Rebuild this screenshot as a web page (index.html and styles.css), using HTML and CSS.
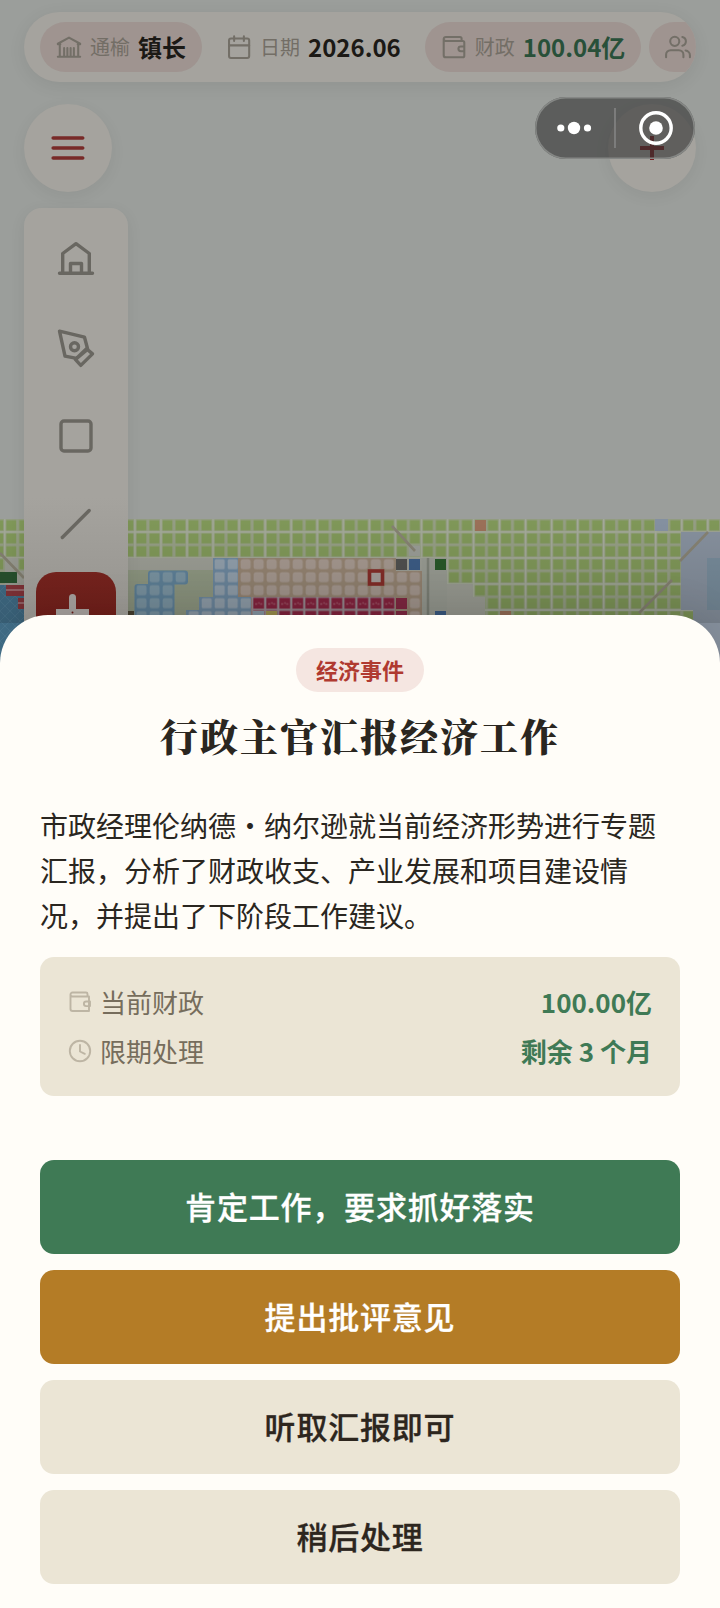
FILE: index.html
```html
<!DOCTYPE html>
<html lang="zh-CN">
<head>
<meta charset="utf-8">
<title>行政主官汇报经济工作</title>
<link rel="stylesheet" href="styles.css">
</head>
<body>
<div class="screen">
  <svg class="map" viewBox="0 0 720 180" width="720" height="180">
    <defs>
      <pattern id="green" x="135" y="17.5" width="13.02" height="13" patternUnits="userSpaceOnUse"><rect width="14" height="14" fill="#949d84"/><rect x="1.400" y="1.700" width="10" height="10.200" fill="#7f9758"/></pattern>
      <pattern id="lines" x="134.300" y="4.300" width="26.04" height="26" patternUnits="userSpaceOnUse"><path d="M0 .7H26.1M.7 0V26" stroke="#a3a999" stroke-width="1.4"/></pattern>
      <pattern id="pink" x="135" y="17.5" width="13.02" height="13" patternUnits="userSpaceOnUse"><rect width="14" height="14" fill="#948371"/><rect x="1.500" y="1.800" width="10" height="10" rx="2.5" fill="#a5988f"/></pattern>
      <pattern id="crimson" x="135" y="17.5" width="13.02" height="13" patternUnits="userSpaceOnUse"><rect width="14" height="14" fill="#988a90"/><rect x="1.200" y="1.400" width="10.700" height="10.800" fill="#86233e"/><path d="M3 7.500h2M6 6.500h1.500M8 7.500h2" fill="none" stroke="#a0576a" stroke-width="1.400"/></pattern>
      <pattern id="blue" x="135" y="17.500" width="13.020" height="13" patternUnits="userSpaceOnUse"><rect width="14" height="14" fill="#5f8199"/><rect x="1.600" y="1.800" width="10" height="10" rx="2" fill="#7b95a3"/></pattern>
      <pattern id="pale" x="135" y="17.500" width="13.020" height="13" patternUnits="userSpaceOnUse"><rect width="14" height="14" fill="#6c879e"/><rect x="1.600" y="1.800" width="10" height="10" rx="1.500" fill="#919fab"/></pattern>
      <pattern id="water" width="10" height="10" patternUnits="userSpaceOnUse"><rect width="10" height="10" fill="#416d87"/><path d="M0 0l10 10M10 0L0 10" stroke="#4c778f" stroke-width=".8"/></pattern>
      <linearGradient id="shade" x1="0" y1="0" x2="0" y2="1"><stop offset="0" stop-color="#000" stop-opacity="0"/><stop offset="1" stop-color="#000" stop-opacity=".13"/></linearGradient>
    </defs>
    <rect y="18" width="720" height="162" fill="#9b9d94"/>
    <rect x="128" y="69" width="86" height="46" fill="#8e9781"/>
    <path d="M0 18H720V30.500H681V109H485V96H473V83H447V57H0z" fill="url(#green)"/>
    <path d="M0 57h5v26H0zM18 57h6v13h-6z" fill="url(#green)"/>
    <path d="M485 109H693V122H485z" fill="url(#green)"/>
    <path d="M0 18H720V30.500H681V109H485V96H473V83H447V57H0z" fill="url(#lines)"/>
    <path d="M485 108.500H693V110H485z" fill="#a3a999"/>
    <path d="M681 31h39v149h-27v-71h-12z" fill="#858f9c"/>
    <path d="M707 57h13v52h-13z" fill="#768a99"/>
    <path d="M655 18h13v12h-13z" fill="#8490a0"/>
    <path d="M475 19h11v11h-11zM500 110h11v8h-11z" fill="#9a7058"/>
    <path d="M0 71h17v11H0z" fill="#28522e"/>
    <path d="M0 84h24v96H0z" fill="url(#water)"/>
    <path d="M6 84h18v11H6zM18 97h6v11h-6z" fill="#85353a"/>
    <path d="M6 89h18M18 102h6" stroke="#a3797e" stroke-width="1.500"/>
    <path d="M151 69.500h34q3 0 3 3v8q0 3-3 3h-10.500V122H134.500V86q0-3 3-3H148V72.500q0-3 3-3z" fill="url(#blue)"/>
    <path d="M213 57h25v65h-52v-13h13V96h14z" fill="url(#pale)"/>
    <path d="M238 57h158v13h26v52H238z" fill="url(#pink)"/>
    <path d="M238 96h13v26h-13z" fill="url(#pale)"/>
    <path d="M251.500 96H395v26H251.500z" fill="url(#crimson)"/>
    <path d="M396 97h11v11h-11zM396 110h11v9h-11z" fill="#842943"/>
    <path d="M253 110h11v10h-11z" fill="#8c9dab"/>
    <path d="M266 110h11v10h-11z" fill="#a29650"/>
    <path d="M128 110h6v10h-6z" fill="#4c4433"/>
    <path d="M396 58h11v11h-11z" fill="#50504f"/>
    <path d="M409 58h11v11h-11zM435 110h11v9h-11z" fill="#3c5c85"/>
    <path d="M409 44.500h11v11h-11z" fill="#989b95"/>
    <path d="M422 57h25v52h-25z" fill="#989b92"/>
    <path d="M435 58h11v11h-11z" fill="#285829"/>
    <path d="M428 57v65" stroke="#7d8177" stroke-width="2.500"/>
    <rect x="369.500" y="70" width="13" height="13" fill="#a69e9a" stroke="#842d28" stroke-width="3.600"/>
    <path d="M0 52l24 25M392 25l23 25M708 31l-28 29M672 79l-33 33" stroke="#858172" stroke-width="2.600" fill="none"/>
    <rect y="20" width="720" height="102" fill="url(#shade)"/>
  </svg>

  <header class="stats">
    <div class="stat tinted">
      <svg class="icon" viewBox="0 0 24 24"><path d="M1.700 21h20.600M3.500 9.500V21M20.500 9.500V21M1.700 9 12 3.300 22.300 9M1.700 9.500H4M20 9.500h2.300M7.500 13v8M10.500 13v8M13.500 13v8M16.500 13v8"/></svg>
      <span class="key">通榆</span><b class="val">镇长</b>
    </div>
    <div class="stat">
      <svg class="icon" viewBox="0 0 24 24"><rect x="2.800" y="4.200" width="18.600" height="18" rx="1.800"/><path d="M2.800 10.500h18.600M7.500 2v4.500M16.500 2v4.500"/></svg>
      <span class="key">日期</span><b class="val">2026.06</b>
    </div>
    <div class="stat tinted">
      <svg class="icon" viewBox="0 0 24 24"><path d="M19 6.500V4.200a1.500 1.500 0 0 0-1.500-1.500h-13A2 2 0 0 0 2.500 4.700V19.500a2 2 0 0 0 2 2H20a1.500 1.500 0 0 0 1.500-1.500V8A1.500 1.500 0 0 0 20 6.500H4.500a2 2 0 0 1-2-1.800M21.500 11.500h-3.200a2.200 2.200 0 0 0 0 4.400h3.200z"/></svg>
      <span class="key">财政</span><b class="val money">100.04亿</b>
    </div>
    <div class="stat tinted people">
      <svg class="icon" viewBox="0 0 24 24"><circle cx="9" cy="6.800" r="4.200"/><path d="M1 21.500v-2.300a4.200 4.200 0 0 1 4.200-4.200h7.600a4.200 4.200 0 0 1 4.200 4.200v2.300M16 2.700a4.200 4.200 0 0 1 0 8.200M19 15.200a4.500 4.500 0 0 1 4 4.500v1.800"/></svg>
    </div>
  </header>

  <div class="controls">
    <div class="round"><svg width="40" height="40" viewBox="0 0 40 40"><path d="M5.200 10h29.500M5.200 20h29.500M5.200 30h29.500" stroke="#782a28" stroke-width="3.600" stroke-linecap="round"/></svg></div>
    <div class="round"><svg width="40" height="40" viewBox="0 0 40 40"><path d="M8 20h24M20 8v24" stroke="#781f22" stroke-width="4"/></svg></div>
  </div>

  <nav class="tools">
    <div class="tool"><svg viewBox="0 0 40 40"><path d="M3.500 33.200h33M6.700 33V13.500L20 3.700l13.300 9.800V33M14.500 33V23.500h11V33"/></svg></div>
    <div class="tool"><svg viewBox="0 0 40 40"><path d="M3.500 3.200l25 6 3.200 12-11 9.200L9 28.200zM30.500 20.700l6 5.200-11.700 11.500-5.500-6z"/><circle cx="18.500" cy="18.700" r="4"/></svg></div>
    <div class="tool"><svg viewBox="0 0 40 40"><rect x="5" y="5" width="30" height="30" rx="3"/></svg></div>
    <div class="tool"><svg viewBox="0 0 40 40"><path d="M6.300 33.500L33.200 6.500"/></svg></div>
    <div class="tool active"><svg viewBox="0 0 80 80"><path d="M36.500 40V25.500" /><path d="M20 37h33v8H20z" class="base"/><circle cx="36.500" cy="40.500" r="1"/></svg></div>
  </nav>

  <div class="capsule">
    <svg width="158" height="62" viewBox="0 0 158 62"><g fill="#fff"><circle cx="24.800" cy="31" r="3.600"/><circle cx="38" cy="31" r="6.200"/><circle cx="51.500" cy="31" r="3.600"/><circle cx="120" cy="31" r="6.800"/></g><path d="M79 11v40" stroke="#858585" stroke-width="1.600"/><circle cx="120" cy="31" r="15.200" fill="none" stroke="#fff" stroke-width="3.400"/></svg>
  </div>

  <section class="sheet">
    <span class="badge">经济事件</span>
    <h1 class="title">行政主官汇报经济工作</h1>
    <p class="body">市政经理伦纳德・纳尔逊就当前经济形势进行专题汇报，分析了财政收支、产业发展和项目建设情况，并提出了下阶段工作建议。</p>
    <div class="facts">
      <div class="fact"><svg class="mini" viewBox="0 0 24 24"><path d="M19.500 6.500V4a1.500 1.500 0 0 0-1.500-1.500H4.500a2 2 0 0 0-2 2V19a2 2 0 0 0 2 2H21V6.500H4.500a2 2 0 0 1-2-2M22 11.500h-3.800a2.200 2.200 0 0 0 0 4.600H22z"/></svg><span>当前财政</span><b>100.00亿</b></div>
      <div class="fact"><svg class="mini" viewBox="0 0 24 24"><circle cx="12" cy="12" r="10.200"/><path d="M12 6v6.500l4.800 2.300"/></svg><span>限期处理</span><b>剩余 3 个月</b></div>
    </div>
    <div class="actions">
      <button class="btn approve">肯定工作，要求抓好落实</button>
      <button class="btn criticize">提出批评意见</button>
      <button class="btn">听取汇报即可</button>
      <button class="btn">稍后处理</button>
    </div>
  </section>
</div>
</body>
</html>
```
FILE: styles.css
```css
* { box-sizing: border-box; }
body { margin: 0; font-family: "Noto Sans CJK SC", sans-serif; }
.screen {
  position: relative;
  width: 720px;
  height: 1608px;
  overflow: hidden;
  display: flex;
  flex-direction: column;
  background: #9b9e9b;
}
.map { position: absolute; left: 0; top: 500.5px; filter: blur(.35px); }
.stats {
  display: flex;
  flex-shrink: 0;
  gap: 8px;
  height: 70px;
  margin: 12px 24px 0;
  padding: 10px 0 10px 16px;
  border-radius: 35px;
  overflow: hidden;
  background: #a5a39e;
  box-shadow: 0 4px 18px rgba(0, 0, 0, .07);
}
.stat {
  display: flex;
  align-items: center;
  flex-shrink: 0;
  gap: 8px;
  height: 50px;
  padding: 0 16px;
  border-radius: 25px;
  white-space: nowrap;
}
.tinted { background: #9f9490; }
.people { width: 150px; }
.icon { width: 26px; height: 26px; fill: none; stroke: #736f67; stroke-width: 1.9; stroke-linecap: round; stroke-linejoin: round; }
.key { font-size: 20px; line-height: 28px; color: #736e66; font-weight: 400; }
.val { font-size: 24px; line-height: 34px; color: #1b1915; }
.money { color: #285039; }
.controls { display: flex; justify-content: space-between; margin: 22px 24px 0; }
.round {
  width: 88px;
  height: 88px;
  border-radius: 50%;
  display: flex;
  align-items: center;
  justify-content: center;
  background: #a5a39e;
  box-shadow: 0 4px 16px rgba(0, 0, 0, .06);
}
.tools {
  position: relative;
  display: flex;
  flex-direction: column;
  align-items: center;
  gap: 8px;
  width: 104px;
  height: 480px;
  margin: 16px 0 0 24px;
  padding-top: 12px;
  border-radius: 18px;
  background: linear-gradient(#a5a39e 0, #a5a39e 290px, #96948f 410px);
  box-shadow: 0 4px 16px rgba(0, 0, 0, .07);
}
.tool { display: flex; align-items: center; justify-content: center; flex-shrink: 0; width: 80px; height: 80px; border-radius: 20px; }
.tool svg { width: 40px; height: 40px; fill: none; stroke: #696761; stroke-width: 3.4; stroke-linecap: round; stroke-linejoin: round; }
.active { background: linear-gradient(#73231e, #641914); }
.active svg { width: 80px; height: 80px; stroke: #a09b98; stroke-width: 7; }
.active .base { fill: #a09b98; stroke: none; }
.active circle { fill: #641914; stroke: none; }
.capsule {
  position: absolute;
  left: 535px;
  top: 97px;
  width: 160px;
  height: 62px;
  border-radius: 31px;
  background: rgba(50, 50, 50, .6);
  display: flex;
  align-items: center;
  justify-content: center;
  box-shadow: inset 0 0 0 1.5px #858785;
}
.sheet {
  position: absolute;
  left: 0;
  bottom: 0;
  width: 720px;
  height: 993px;
  padding: 33px 40px 24px;
  border-radius: 48px 48px 0 0;
  background: #fffdf8;
  display: flex;
  flex-direction: column;
  align-items: center;
  box-shadow: 0 -8px 40px rgba(0, 0, 0, .08);
}
.badge { height: 44px; padding: 0 20px; border-radius: 22px; background: #f5e6e1; color: #b03a30; font-size: 22px; font-weight: 700; line-height: 42px; }
.title {
  margin: 15px 0 0;
  font-family: "Noto Serif CJK SC", "Source Han Serif SC", "Noto Sans CJK SC", serif;
  font-size: 38px;
  font-weight: 900;
  line-height: 56px;
  letter-spacing: 2px;
  color: #2a2620;
  white-space: nowrap;
}
.body { width: 640px; margin: 40px 0 0; font-size: 28px; line-height: 44.8px; color: #2a2620; }
.facts {
  display: flex;
  flex-direction: column;
  gap: 10px;
  width: 640px;
  height: 139px;
  margin-top: 20px;
  padding: 25px 28px;
  border-radius: 14px;
  background: #ebe5d5;
}
.fact { display: flex; align-items: center; gap: 8px; height: 39px; font-size: 26px; color: #766d5c; }
.fact b { margin-left: auto; color: #3f7a55; }
.mini { width: 24px; height: 24px; fill: none; stroke: #bdb5a4; stroke-width: 1.9; stroke-linejoin: round; stroke-linecap: round; }
.actions { display: flex; flex-direction: column; gap: 16px; width: 640px; margin-top: auto; }
.btn {
  height: 94px;
  padding: 0 0 3px;
  border: 0;
  border-radius: 14px;
  background: #ebe5d5;
  color: #2d261e;
  font: 500 31px/44px "Noto Sans CJK SC", sans-serif;
  letter-spacing: .8px;
  -webkit-text-stroke: .3px currentColor;
}
.approve { background: #3f7a55; color: #fff; }
.criticize { background: #b47c26; color: #fff; }
```
